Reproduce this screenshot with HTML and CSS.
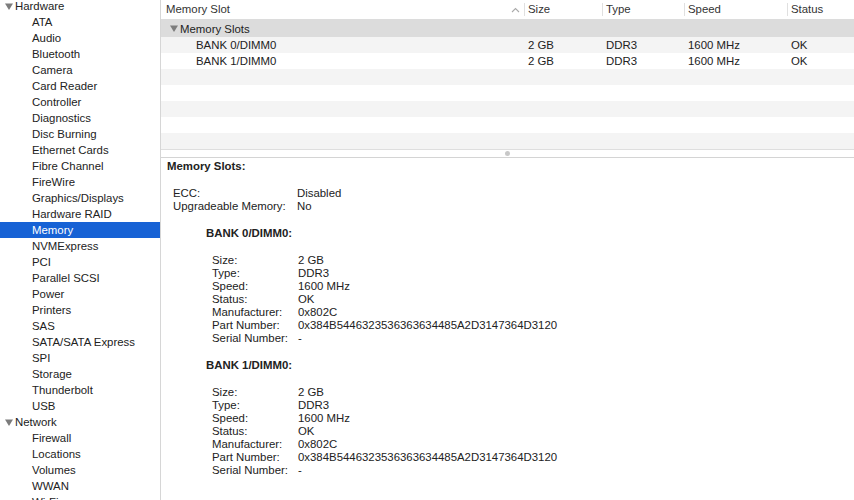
FILE: index.html
```html
<!DOCTYPE html>
<html>
<head>
<meta charset="utf-8">
<link rel="stylesheet" href="styles.css">
</head>
<body>
<div class="app">
  <aside class="sidebar">
    <div class="item group"><svg class="tri" width="8" height="7" viewBox="0 0 8 7"><polygon points="0,0.5 8,0.5 4,7" fill="#7c7c7c"/></svg>Hardware</div>
    <div class="item">ATA</div>
    <div class="item">Audio</div>
    <div class="item">Bluetooth</div>
    <div class="item">Camera</div>
    <div class="item">Card Reader</div>
    <div class="item">Controller</div>
    <div class="item">Diagnostics</div>
    <div class="item">Disc Burning</div>
    <div class="item">Ethernet Cards</div>
    <div class="item">Fibre Channel</div>
    <div class="item">FireWire</div>
    <div class="item">Graphics/Displays</div>
    <div class="item">Hardware RAID</div>
    <div class="item selected">Memory</div>
    <div class="item">NVMExpress</div>
    <div class="item">PCI</div>
    <div class="item">Parallel SCSI</div>
    <div class="item">Power</div>
    <div class="item">Printers</div>
    <div class="item">SAS</div>
    <div class="item">SATA/SATA Express</div>
    <div class="item">SPI</div>
    <div class="item">Storage</div>
    <div class="item">Thunderbolt</div>
    <div class="item">USB</div>
    <div class="item group"><svg class="tri" width="8" height="7" viewBox="0 0 8 7"><polygon points="0,0.5 8,0.5 4,7" fill="#7c7c7c"/></svg>Network</div>
    <div class="item">Firewall</div>
    <div class="item">Locations</div>
    <div class="item">Volumes</div>
    <div class="item">WWAN</div>
    <div class="item">Wi-Fi</div>
  </aside>
  <main class="main">
    <div class="table">
      <div class="thead">
        <div class="th c1">Memory Slot<svg class="sort" width="9" height="6" viewBox="0 0 9 6"><polyline points="1,5 4.5,1.5 8,5" fill="none" stroke="#aaa" stroke-width="1.1"/></svg></div>
        <div class="th c2">Size</div>
        <div class="th c3">Type</div>
        <div class="th c4">Speed</div>
        <div class="th c5">Status</div>
      </div>
      <div class="grouprow"><svg class="tri" width="8" height="7" viewBox="0 0 8 7"><polygon points="0,0.5 8,0.5 4,7" fill="#7c7c7c"/></svg>Memory Slots</div>
      <div class="row alt">
        <div class="td c1 indent">BANK 0/DIMM0</div>
        <div class="td c2">2 GB</div>
        <div class="td c3">DDR3</div>
        <div class="td c4">1600 MHz</div>
        <div class="td c5">OK</div>
      </div>
      <div class="row">
        <div class="td c1 indent">BANK 1/DIMM0</div>
        <div class="td c2">2 GB</div>
        <div class="td c3">DDR3</div>
        <div class="td c4">1600 MHz</div>
        <div class="td c5">OK</div>
      </div>
      <div class="row alt"></div>
      <div class="row"></div>
      <div class="row alt"></div>
      <div class="row"></div>
      <div class="row alt"></div>
    </div>
    <div class="splitter"><span class="dot"></span></div>
    <div class="detail">
      <div class="title">Memory Slots:</div>
      <div class="kv top">
        <span>ECC:</span><span>Disabled</span>
        <span>Upgradeable Memory:</span><span>No</span>
      </div>
      <div class="bank">BANK 0/DIMM0:</div>
      <div class="kv sub">
        <span>Size:</span><span>2 GB</span>
        <span>Type:</span><span>DDR3</span>
        <span>Speed:</span><span>1600 MHz</span>
        <span>Status:</span><span>OK</span>
        <span>Manufacturer:</span><span>0x802C</span>
        <span>Part Number:</span><span>0x384B5446323536363634485A2D3147364D3120</span>
        <span>Serial Number:</span><span>-</span>
      </div>
      <div class="bank">BANK 1/DIMM0:</div>
      <div class="kv sub">
        <span>Size:</span><span>2 GB</span>
        <span>Type:</span><span>DDR3</span>
        <span>Speed:</span><span>1600 MHz</span>
        <span>Status:</span><span>OK</span>
        <span>Manufacturer:</span><span>0x802C</span>
        <span>Part Number:</span><span>0x384B5446323536363634485A2D3147364D3120</span>
        <span>Serial Number:</span><span>-</span>
      </div>
    </div>
  </main>
</div>
</body>
</html>
```

FILE: styles.css
```css
html, body {
  margin: 0;
  padding: 0;
  background: #fff;
  overflow: hidden;
}
body {
  font-family: "Liberation Sans", Arial, sans-serif;
  font-size: 11.4px;
  color: #222;
  width: 854px;
  height: 500px;
}
.app {
  display: flex;
  height: 500px;
}
.sidebar {
  width: 160px;
  flex: none;
  border-right: 1px solid #d6d6d6;
  margin-top: -2px;
  overflow: hidden;
}
.item {
  height: 16px;
  line-height: 16px;
  padding-left: 32px;
  white-space: nowrap;
}
.item.group {
  padding-left: 5px;
  display: flex;
  align-items: center;
}
.tri {
  display: block;
  flex: none;
  margin-right: 2px;
}
.item.selected {
  background: #1762d5;
  color: #fff;
}
.main {
  flex: 1;
  display: flex;
  flex-direction: column;
  min-width: 0;
}
.thead {
  display: flex;
  height: 19px;
  border-bottom: 1px solid #dcdcdc;
  color: #333;
}
.th {
  line-height: 19px;
  position: relative;
  padding-left: 4px;
  box-sizing: border-box;
}
.th + .th::before {
  content: "";
  position: absolute;
  left: 0;
  top: 3px;
  height: 13px;
  border-left: 1px solid #e0e0e0;
}
.c1 { width: 363px; padding-left: 5px; }
.c2 { width: 78px; }
.c3 { width: 82px; }
.c4 { width: 103px; }
.c5 { flex: 1; }
.th.c1 {
  display: flex;
  align-items: center;
  justify-content: space-between;
  padding-right: 4px;
}
.sort {
  display: block;
}
.grouprow {
  height: 17px;
  line-height: 18px;
  background: #dcdcdc;
  padding-left: 9px;
  display: flex;
  align-items: center;
}
.row {
  display: flex;
  height: 16px;
  line-height: 16px;
}
.row.alt {
  background: #f4f4f4;
}
.td {
  padding-left: 4px;
  box-sizing: border-box;
  white-space: nowrap;
}
.td.indent {
  padding-left: 35px;
}
.splitter {
  height: 7px;
  border-top: 1px solid #dedede;
  border-bottom: 1px solid #d4d4d4;
  display: flex;
  justify-content: center;
  align-items: center;
}
.dot {
  width: 5px;
  height: 5px;
  border-radius: 50%;
  background: #c8c8c8;
}
.detail {
  padding: 2px 0 0 6px;
  line-height: 13px;
}
.title {
  font-weight: bold;
}
.kv {
  display: grid;
  margin-top: 14px;
}
.kv.top {
  grid-template-columns: 124px auto;
  padding-left: 6px;
}
.bank {
  font-weight: bold;
  margin-top: 14px;
  padding-left: 39px;
}
.kv.sub {
  grid-template-columns: 86px auto;
  padding-left: 45px;
}
```
